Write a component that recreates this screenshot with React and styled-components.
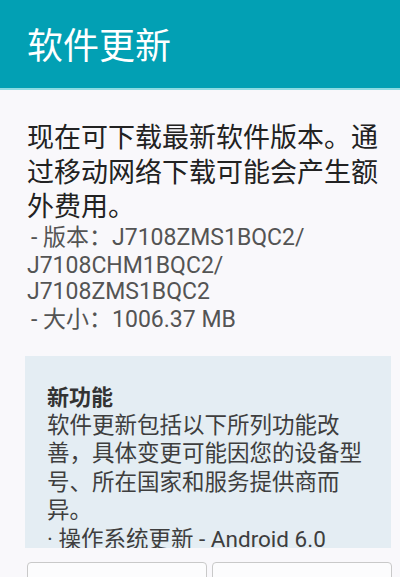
import React from "react";
import styled, { createGlobalStyle } from "styled-components";

const Global = createGlobalStyle`
  html, body { margin: 0; padding: 0; background: #f9f8fb; }
  body { width: 400px; height: 577px; overflow: hidden; }
  * { box-sizing: border-box; }
`;

const Screen = styled.div`
  width: 400px;
  height: 577px;
  overflow: hidden;
  background: #f9f8fb;
  display: flex;
  flex-direction: column;
  font-family: Roboto, "Noto Sans CJK SC", sans-serif;
`;

const Header = styled.header`
  height: 90px;
  flex: none;
  background: #02a0b4;
  border-bottom: 2px solid #8ddbe2;
  display: flex;
  align-items: center;
  padding: 0 0 2px 27px;
`;

const Title = styled.h1`
  margin: 0;
  font-family: "Noto Sans CJK SC", sans-serif;
  font-weight: 400;
  font-size: 36px;
  line-height: 1;
  color: #ffffff;
`;

const Body = styled.main`
  display: flex;
  flex-direction: column;
  padding: 29px 8px 0 27px;
`;

const Lead = styled.p`
  margin: 0;
  font-family: "Noto Sans CJK SC", sans-serif;
  font-size: 27px;
  line-height: 34.5px;
  color: #222;
`;

const Details = styled.div`
  display: flex;
  flex-direction: column;
  color: #545454;
  font-size: 23px;
`;

const DetailLine = styled.div`
  white-space: nowrap;
  height: ${(p) => p.$h}px;
  line-height: ${(p) => p.$h}px;
  padding-left: ${(p) => (p.$indent ? 4 : 0)}px;
`;

const Notes = styled.section`
  margin: 22px 0 0 -2px;
  width: 366px;
  height: 192px;
  overflow: hidden;
  background: #e4edf3;
  padding: 25px 0 0 22px;
  color: #3e3e3e;
`;

const NotesTitle = styled.h2`
  margin: 0 0 2px;
  font-family: "Noto Sans CJK SC", sans-serif;
  font-weight: 700;
  font-size: 22px;
  line-height: 28px;
  color: #333;
`;

const NotesLine = styled.div`
  white-space: nowrap;
  font-size: 22.5px;
  line-height: 28.5px;
`;

const Buttons = styled.div`
  display: grid;
  grid-template-columns: 180px 180px;
  gap: 5px;
  margin-top: 14px;
`;

const Button = styled.button`
  height: 48px;
  border: 1px solid #c9c9c9;
  border-radius: 4px;
  background: #fcfcfd;
  font-family: "Noto Sans CJK SC", sans-serif;
  font-size: 20px;
  color: #333;
`;

export default function App() {
  return (
    <>
      <Global />
      <Screen>
        <Header>
          <Title>软件更新</Title>
        </Header>
        <Body>
          <Lead>
            现在可下载最新软件版本。通
            <br />
            过移动网络下载可能会产生额
            <br />
            外费用。
          </Lead>
          <Details>
            <DetailLine $h={30} $indent>- 版本：J7108ZMS1BQC2/</DetailLine>
            <DetailLine $h={25}>J7108CHM1BQC2/</DetailLine>
            <DetailLine $h={28}>J7108ZMS1BQC2</DetailLine>
            <DetailLine $h={28} $indent>- 大小：1006.37 MB</DetailLine>
          </Details>
          <Notes>
            <NotesTitle>新功能</NotesTitle>
            <NotesLine>软件更新包括以下所列功能改</NotesLine>
            <NotesLine>善，具体变更可能因您的设备型</NotesLine>
            <NotesLine>号、所在国家和服务提供商而</NotesLine>
            <NotesLine>异。</NotesLine>
            <NotesLine>· 操作系统更新 - Android 6.0</NotesLine>
          </Notes>
          <Buttons>
            <Button />
            <Button />
          </Buttons>
        </Body>
      </Screen>
    </>
  );
}
